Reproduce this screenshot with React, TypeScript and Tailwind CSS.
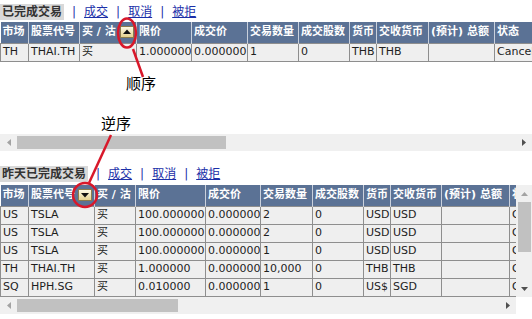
import React from "react";

type Col = { label: string; w: number; sort?: "up" | "down" };

const topCols: Col[] = [
  { label: "市场", w: 28 },
  { label: "股票代号", w: 51 },
  { label: "买 / 沽", w: 57, sort: "up" },
  { label: "限价", w: 55 },
  { label: "成交价", w: 56 },
  { label: "交易数量", w: 51 },
  { label: "成交股数", w: 51 },
  { label: "货币", w: 27 },
  { label: "交收货币", w: 52 },
  { label: "(预计) 总额", w: 66 },
  { label: "状态", w: 60 },
];

const bottomCols: Col[] = [
  { label: "市场", w: 28 },
  { label: "股票代号", w: 66, sort: "down" },
  { label: "买 / 沽", w: 41 },
  { label: "限价", w: 70 },
  { label: "成交价", w: 55 },
  { label: "交易数量", w: 52 },
  { label: "成交股数", w: 51 },
  { label: "货币", w: 27 },
  { label: "交收货币", w: 51 },
  { label: "(预计) 总额", w: 68 },
  { label: "状态", w: 60 },
];

const topRows = [["TH", "THAI.TH", "买", "1.000000", "0.000000", "1", "0", "THB", "THB", "", "Cancelled"]];

const bottomRows = [
  ["US", "TSLA", "买", "100.000000", "0.000000", "2", "0", "USD", "USD", "", "Cancelled"],
  ["US", "TSLA", "买", "100.000000", "0.000000", "2", "0", "USD", "USD", "", "Cancelled"],
  ["US", "TSLA", "买", "100.000000", "0.000000", "1", "0", "USD", "USD", "", "Cancelled"],
  ["TH", "THAI.TH", "买", "1.000000", "0.000000", "10,000", "0", "THB", "THB", "", "Cancelled"],
  ["SQ", "HPH.SG", "买", "0.010000", "0.000000", "1", "0", "US$", "SGD", "", "Cancelled"],
];

function SortIcon({ dir }: { dir: "up" | "down" }) {
  const id = "g-" + dir;
  return (
    <svg width="14" height="12" viewBox="0 0 14 12" className="shrink-0 mr-[2px]">
      <defs>
        <linearGradient id={id} x1="0" y1="0" x2="0" y2="1">
          <stop offset="0" stopColor="#fffcea" />
          <stop offset="1" stopColor="#e4d08a" />
        </linearGradient>
      </defs>
      <rect x="0.5" y="0.5" width="13" height="11" fill={`url(#${id})`} stroke="#8c7c4c" />
      {dir === "up" ? (
        <path d="M3 8 L7 3.5 L11 8 Z" fill="#111" />
      ) : (
        <path d="M3 4 L7 8.5 L11 4 Z" fill="#111" />
      )}
    </svg>
  );
}

function Table({ cols, rows }: { cols: Col[]; rows: string[][] }) {
  const total = cols.reduce((s, c) => s + c.w, 0);
  return (
    <table className="table-fixed border-collapse" style={{ width: total }}>
      <colgroup>
        {cols.map((c, i) => (
          <col key={i} style={{ width: c.w }} />
        ))}
      </colgroup>
      <thead>
        <tr className="h-[21px] bg-[#5b7295]">
          {cols.map((c, i) => (
            <th
              key={i}
              className="border-r border-[#c9d0dc] p-0 text-left text-[11px] font-bold text-white"
            >
              <div className="flex items-center">
                <span className="flex-1 overflow-hidden whitespace-nowrap pl-[2px]">{c.label}</span>
                {c.sort && <SortIcon dir={c.sort} />}
              </div>
            </th>
          ))}
        </tr>
      </thead>
      <tbody>
        {rows.map((r, ri) => (
          <tr key={ri} className="h-[18px] bg-[#efefef]">
            {r.map((v, i) => (
              <td
                key={i}
                className="overflow-hidden whitespace-nowrap border border-[#8e8e8e] px-[2px] py-0 text-[11px] leading-[16px] text-[#1e1e1e]"
              >
                {v}
              </td>
            ))}
          </tr>
        ))}
      </tbody>
    </table>
  );
}

function ArrowL({ dark }: { dark?: boolean }) {
  return (
    <svg width="4" height="7" viewBox="0 0 4 7">
      <path d="M4 0 L0 3.5 L4 7 Z" fill={dark ? "#505050" : "#a3a3a3"} />
    </svg>
  );
}

function ArrowR({ dark }: { dark?: boolean }) {
  return (
    <svg width="4" height="7" viewBox="0 0 4 7">
      <path d="M0 0 L4 3.5 L0 7 Z" fill={dark ? "#505050" : "#a3a3a3"} />
    </svg>
  );
}

function HScroll({ thumb }: { thumb: number }) {
  return (
    <div className="flex h-[17px] flex-1 items-center bg-[#f0f0f0]">
      <div className="flex w-[17px] shrink-0 justify-center">
        <ArrowL />
      </div>
      <div className="h-[13px] shrink-0 bg-[#c1c1c1]" style={{ width: thumb }} />
      <div className="flex-1" />
      <div className="flex w-[17px] shrink-0 justify-center">
        <ArrowR dark />
      </div>
    </div>
  );
}

function Title({ text }: { text: string }) {
  return (
    <div className="flex h-[16px] items-center text-[12px] leading-[16px]">
      <span className="bg-[#d9d9d9] px-[2px] font-bold text-[#333]">{text}</span>
      <span className="mx-[8px] text-[#1b2fa8]">|</span>
      <a className="text-[#1b2fa8] underline">成交</a>
      <span className="mx-[8px] text-[#1b2fa8]">|</span>
      <a className="text-[#1b2fa8] underline">取消</a>
      <span className="mx-[8px] text-[#1b2fa8]">|</span>
      <a className="text-[#1b2fa8] underline">被拒</a>
    </div>
  );
}

export default function App() {
  return (
    <div className="relative h-[319px] w-[532px] overflow-hidden bg-white font-['DejaVu_Sans','Noto_Sans_CJK_SC',sans-serif]">
      <div className="pt-[4px]">
        <Title text="已完成交易" />
        <div className="mt-[2px] h-[112px] overflow-hidden">
          <Table cols={topCols} rows={topRows} />
        </div>
        <div className="flex">
          <HScroll thumb={209} />
        </div>
      </div>

      <div className="mt-[15px]">
        <Title text="昨天已完成交易" />
        <div className="mt-[3px] flex">
          <div className="h-[112px] w-[516px] overflow-hidden">
            <Table cols={bottomCols} rows={bottomRows} />
          </div>
          <div className="flex h-[112px] w-[16px] flex-col items-center bg-[#f0f0f0]">
            <div className="flex h-[17px] items-center">
              <svg width="7" height="4" viewBox="0 0 7 4">
                <path d="M0 4 L3.5 0 L7 4 Z" fill="#a3a3a3" />
              </svg>
            </div>
            <div className="h-[50px] w-[13px] bg-[#c1c1c1]" />
            <div className="flex-1" />
            <div className="flex h-[17px] items-center">
              <svg width="7" height="4" viewBox="0 0 7 4">
                <path d="M0 0 L3.5 4 L7 0 Z" fill="#505050" />
              </svg>
            </div>
          </div>
        </div>
        <div className="flex">
          <HScroll thumb={161} />
          <div className="w-[16px] bg-white" />
        </div>
      </div>

      {/* annotations */}
      <svg className="pointer-events-none absolute left-0 top-0" width="532" height="319">
        <ellipse cx="127" cy="33" rx="9" ry="14.5" fill="none" stroke="#d8182a" strokeWidth="2.5" />
        <line x1="133" y1="49" x2="143" y2="77" stroke="#d8182a" strokeWidth="2.5" />
        <ellipse cx="85" cy="195" rx="12" ry="12" fill="none" stroke="#d8182a" strokeWidth="2.5" />
        <line x1="111" y1="135" x2="89" y2="183" stroke="#d8182a" strokeWidth="2.5" />
      </svg>
      <span className="absolute left-[126px] top-[75px] text-[15px] leading-[18px] text-black">顺序</span>
      <span className="absolute left-[101px] top-[115px] text-[15px] leading-[18px] text-black">逆序</span>
    </div>
  );
}
